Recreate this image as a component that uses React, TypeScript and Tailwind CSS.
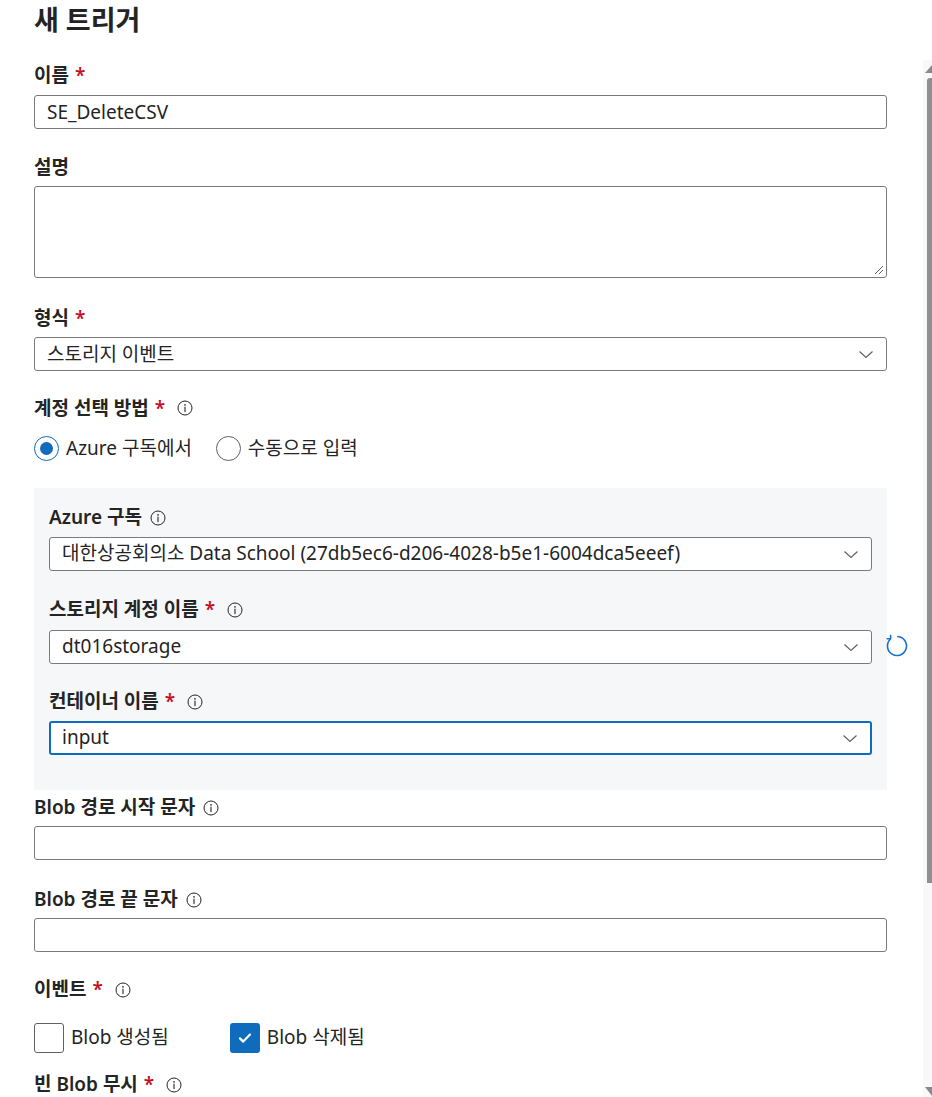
import React from "react";

const font = {
  fontFamily: '"Noto Sans", "Noto Sans CJK KR", sans-serif',
};

function InfoIcon() {
  return (
    <svg width="16" height="16" viewBox="0 0 16 16" fill="none" className="shrink-0">
      <circle cx="8" cy="8" r="7" stroke="#242424" strokeWidth="1" />
      <circle cx="8" cy="4.9" r="0.8" fill="#242424" />
      <path d="M8 7v4.6" stroke="#242424" strokeWidth="1.1" strokeLinecap="round" />
    </svg>
  );
}

function Chevron() {
  return (
    <svg width="16" height="16" viewBox="0 0 16 16" fill="none" className="shrink-0">
      <path d="M1.5 5.5L8 11.5l6.5-6" stroke="#616161" strokeWidth="1.2" />
    </svg>
  );
}

function Label({
  text,
  required,
  info,
  className = "",
}: {
  text: string;
  required?: boolean;
  info?: boolean;
  className?: string;
}) {
  return (
    <div className={`flex h-6 items-center text-[19px] font-semibold text-[#242424] ${className}`}>
      <span>{text}</span>
      {required && <span className="ml-1.5 text-[#c50f1f]">*</span>}
      {info && (
        <span className={required ? "ml-3" : "ml-2"}>
          <InfoIcon />
        </span>
      )}
    </div>
  );
}

function TextInput({ value = "" }: { value?: string }) {
  return (
    <div className="flex h-[34px] items-center rounded-[3px] border border-[#7a7a7a] bg-white px-3 text-[19px] text-[#242424]">
      {value}
    </div>
  );
}

function Select({ value, focused }: { value: string; focused?: boolean }) {
  return (
    <div
      className={`flex h-[34px] items-center justify-between rounded-[3px] bg-white pl-3 pr-3 text-[19px] text-[#242424] ${
        focused ? "border-2 border-[#0f6cbd] pl-[11px]" : "border border-[#7a7a7a]"
      }`}
    >
      <span className="truncate">{value}</span>
      <Chevron />
    </div>
  );
}

function Radio({ label, checked }: { label: string; checked?: boolean }) {
  return (
    <div className="flex items-center gap-[7px]">
      <span
        className={`flex h-[25px] w-[25px] items-center justify-center rounded-full border ${
          checked ? "border-[#0f6cbd]" : "border-[#616161]"
        } bg-white`}
      >
        {checked && <span className="h-[13px] w-[13px] rounded-full bg-[#0f6cbd]" />}
      </span>
      <span className="text-[19px] text-[#242424]">{label}</span>
    </div>
  );
}

function Checkbox({ label, checked }: { label: string; checked?: boolean }) {
  return (
    <div className="flex items-center gap-[7px]">
      <span
        className={`flex h-[30px] w-[30px] items-center justify-center rounded-[3px] ${
          checked ? "bg-[#0f6cbd]" : "border border-[#616161] bg-white"
        }`}
      >
        {checked && (
          <svg width="18" height="18" viewBox="0 0 18 18" fill="none">
            <path d="M4 9.4l3.2 3.2L14 5.6" stroke="white" strokeWidth="2.2" strokeLinecap="round" strokeLinejoin="round" />
          </svg>
        )}
      </span>
      <span className="text-[19px] text-[#242424]">{label}</span>
    </div>
  );
}

function RefreshIcon() {
  return (
    <svg width="24" height="24" viewBox="0 0 24 24" fill="none">
      <path
        d="M12.8 2.54A9.5 9.5 0 1 1 5.28 5.28"
        stroke="#1a73c8"
        strokeWidth="1.6"
        strokeLinecap="round"
      />
      <path d="M2.2 4.8h3.4V1.4" stroke="#1a73c8" strokeWidth="1.6" strokeLinecap="round" strokeLinejoin="round" />
    </svg>
  );
}

function Scrollbar() {
  return (
    <div className="mt-[60px] flex w-[9px] flex-col bg-[#f8f8f8]">
      <div className="flex h-[18px] items-center justify-end">
        <svg width="7" height="8" viewBox="0 0 7 8">
          <path d="M0 8L7 0V8Z" fill="#8a8a8a" />
        </svg>
      </div>
      <div className="ml-auto h-[805px] w-[5px] rounded-tl-[3px] bg-[#8f8f8f]" />
      <div className="flex-1" />
      <div className="flex h-[10px] items-start justify-end">
        <svg width="7" height="9" viewBox="0 0 7 9">
          <path d="M0 0H7V9Z" fill="#8a8a8a" />
        </svg>
      </div>
    </div>
  );
}

export default function App() {
  return (
    <div className="flex h-[1097px] w-[932px] overflow-hidden bg-white" style={font}>
      <div className="flex w-[887px] flex-col pl-[34px]">
        <h1 className="mt-0.5 flex h-9 items-center text-[27px] font-bold text-[#242424]">새 트리거</h1>

        <Label text="이름" required className="mt-[25px]" />
        <div className="mt-2">
          <TextInput value="SE_DeleteCSV" />
        </div>

        <Label text="설명" className="mt-[26px]" />
        <div className="relative mt-[7px] h-[92px] rounded-[3px] border border-[#7a7a7a] bg-white">
          <svg width="10" height="10" viewBox="0 0 10 10" className="absolute bottom-[2px] right-[2px]">
            <path d="M9 1L1 9M9 5L5 9" stroke="#616161" strokeWidth="1" />
          </svg>
        </div>

        <Label text="형식" required className="mt-[28px]" />
        <div className="mt-[7px]">
          <Select value="스토리지 이벤트" />
        </div>

        <Label text="계정 선택 방법" required info className="mt-[25px]" />
        <div className="mt-[14px] flex items-center gap-6">
          <Radio label="Azure 구독에서" checked />
          <Radio label="수동으로 입력" />
        </div>

        <div className="mt-[25px] flex flex-col bg-[#f6f7f9] px-[15px] pb-[35px] pt-[18px]">
          <Label text="Azure 구독" info />
          <div className="mt-[7px]">
            <Select value="대한상공회의소 Data School (27db5ec6-d206-4028-b5e1-6004dca5eeef)" />
          </div>

          <Label text="스토리지 계정 이름" required info className="mt-[27px]" />
          <div className="relative mt-2">
            <Select value="dt016storage" />
            <div className="absolute left-[836px] top-[4px]">
              <RefreshIcon />
            </div>
          </div>

          <Label text="컨테이너 이름" required info className="mt-[26px]" />
          <div className="mt-[7px]">
            <Select value="input" focused />
          </div>
        </div>

        <Label text="Blob 경로 시작 문자" info className="mt-[6px]" />
        <div className="mt-[6px]">
          <TextInput />
        </div>

        <Label text="Blob 경로 끝 문자" info className="mt-[28px]" />
        <div className="mt-[6px]">
          <TextInput />
        </div>

        <Label text="이벤트" required info className="mt-[26px]" />
        <div className="mt-[21px] flex items-center gap-[61px]">
          <Checkbox label="Blob 생성됨" />
          <Checkbox label="Blob 삭제됨" checked />
        </div>

        <Label text="빈 Blob 무시" required info className="mt-[20px]" />
      </div>
      <div className="w-[36px]" />
      <Scrollbar />
    </div>
  );
}
